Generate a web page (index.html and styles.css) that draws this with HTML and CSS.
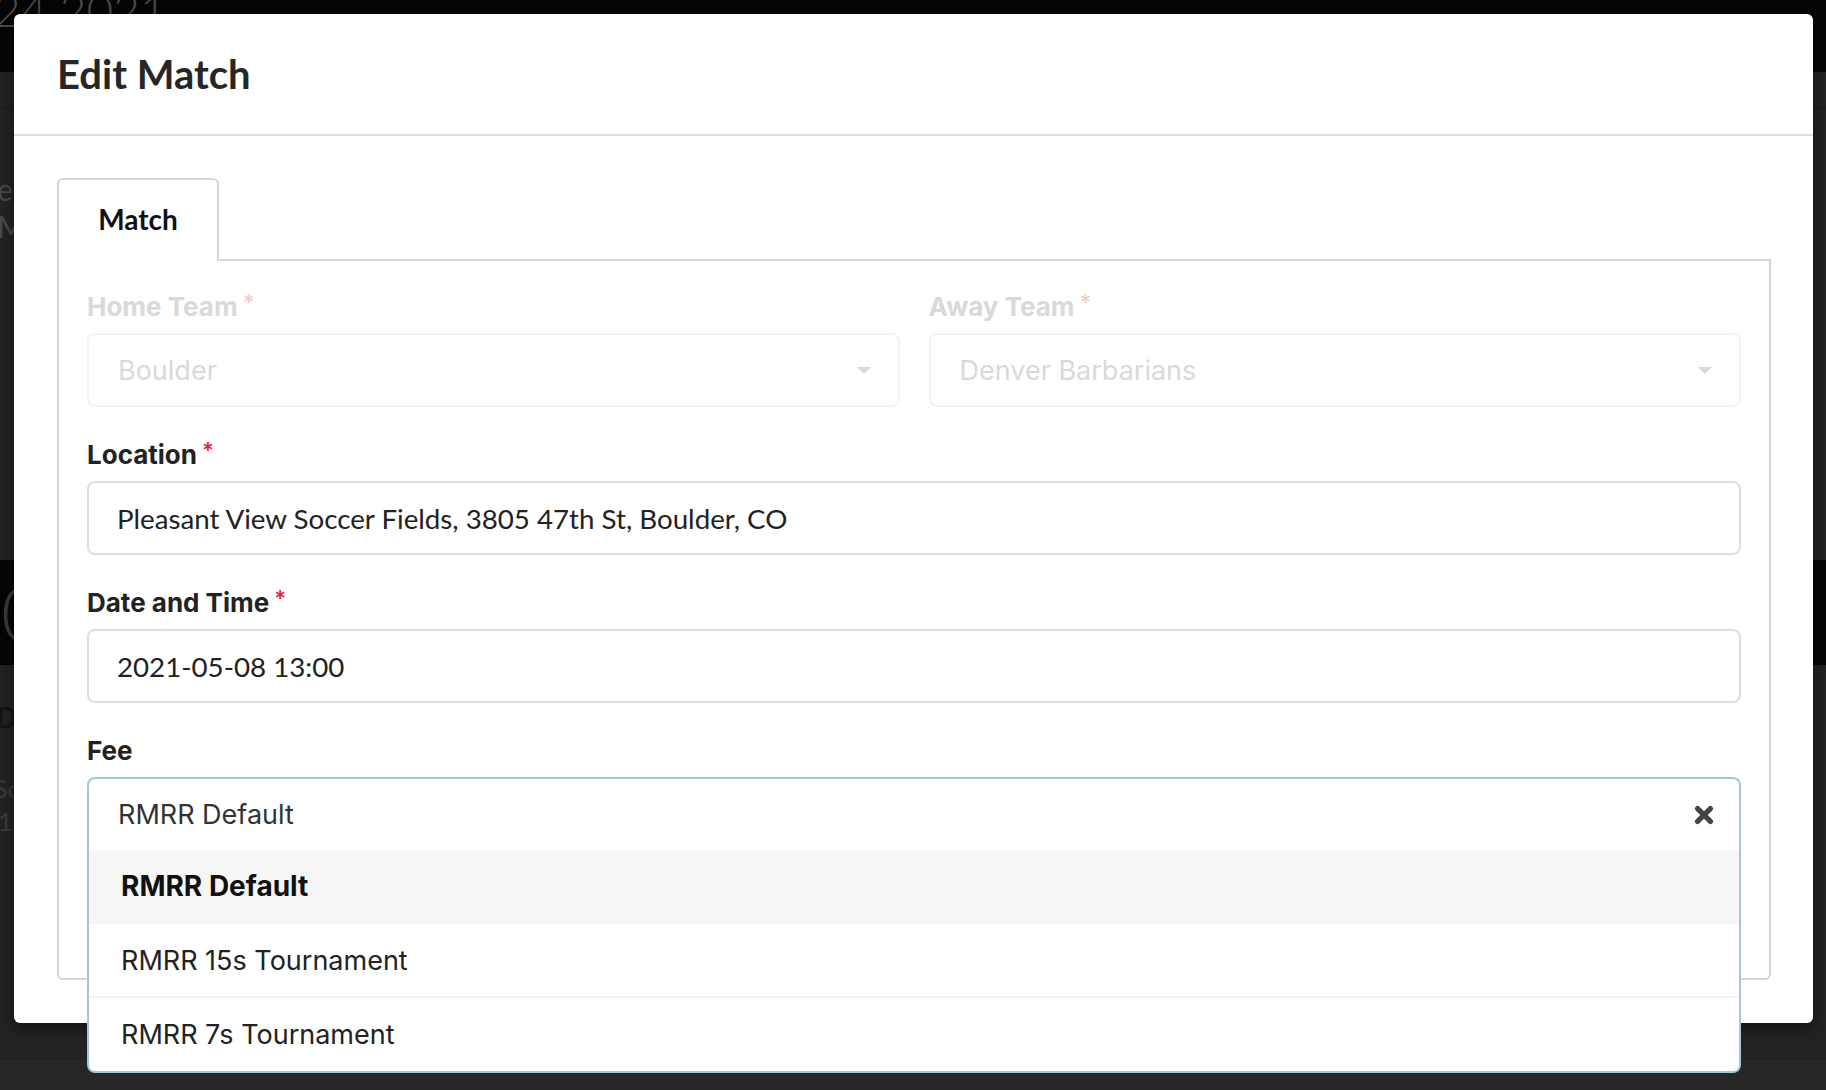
FILE: index.html
```html
<!DOCTYPE html>
<html lang="en">
<head>
<meta charset="utf-8">
<title>Edit Match</title>
<link rel="stylesheet" href="styles.css">
</head>
<body>
<div class="page">
  <div class="bg-top"><span class="bg-date">24 2021</span></div>
  <div class="bg-subbar"></div>
  <div class="bg-sec1">
    <div class="bg-text">er</div>
    <div class="bg-text">M</div>
  </div>
  <div class="bg-band"><span class="bg-big">0</span></div>
  <div class="bg-sec2">
    <div class="bg-text bg-bold">De</div>
    <div class="bg-text bg-small">Sc</div>
    <div class="bg-text bg-small bg-last">1</div>
  </div>
  <div class="bg-foot"></div>
</div>

<div class="modal">
  <div class="modal-header">
    <h2 class="modal-title">Edit Match</h2>
  </div>
  <div class="modal-body">
    <div class="tabs">
      <div class="tab">Match</div>
    </div>
    <div class="tab-panel">
      <div class="field-row">
        <div class="field">
          <label class="field-label label-disabled">Home Team<span class="req req-disabled">*</span></label>
          <div class="select">
            <span class="select-value">Boulder</span>
            <span class="select-arrow"></span>
          </div>
        </div>
        <div class="field">
          <label class="field-label label-disabled">Away Team<span class="req req-disabled">*</span></label>
          <div class="select">
            <span class="select-value">Denver Barbarians</span>
            <span class="select-arrow"></span>
          </div>
        </div>
      </div>
      <div class="field">
        <label class="field-label">Location<span class="req">*</span></label>
        <div class="input">Pleasant View Soccer Fields, 3805 47th St, Boulder, CO</div>
      </div>
      <div class="field">
        <label class="field-label">Date and Time<span class="req">*</span></label>
        <div class="input">2021-05-08 13:00</div>
      </div>
      <div class="field field-last">
        <label class="field-label">Fee</label>
        <div class="combo">
          <div class="combo-control">
            <span class="combo-value">RMRR Default</span>
            <svg class="combo-clear" width="20" height="20" viewBox="0 0 20 20" aria-hidden="true">
              <path d="M3.6 3.6 L16.4 16.4 M16.4 3.6 L3.6 16.4" stroke="#444" stroke-width="5.2" stroke-linecap="round" fill="none"/>
            </svg>
          </div>
          <div class="combo-menu">
            <div class="option option-focused">RMRR Default</div>
            <div class="option">RMRR 15s Tournament</div>
            <div class="option">RMRR 7s Tournament</div>
          </div>
        </div>
      </div>
    </div>
  </div>
</div>
</body>
</html>
```

FILE: styles.css
```css
html, body {
  margin: 0;
  padding: 0;
}

body {
  background: #232323;
  font-family: "Lato", "Liberation Sans", sans-serif;
  width: 1826px;
  height: 1090px;
  overflow: hidden;
  position: relative;
}

/* ---------- dimmed page behind the modal ---------- */
.page {
  height: 1090px;
  overflow: hidden;
}

.bg-top {
  height: 72px;
  background: #050505;
  overflow: hidden;
}

.bg-date {
  display: block;
  font: 300 46px/46px "Lato", sans-serif;
  color: #4a4a4a;
  margin: -13px 0 0 -6px;
  white-space: nowrap;
}

.bg-subbar {
  height: 36px;
  border-bottom: 1px solid #1b1b1b;
}

.bg-sec1 {
  height: 451px;
  box-sizing: border-box;
  padding-top: 62px;
}

.bg-text {
  font: 400 30px/37px "Lato", sans-serif;
  color: #4a4a4a;
  margin-left: -3px;
  white-space: nowrap;
}

.bg-band {
  height: 105px;
  background: #050505;
  overflow: hidden;
}

.bg-big {
  display: block;
  font: 300 76px/105px "Lato", sans-serif;
  color: #3a3a3a;
  margin-left: 1px;
}

.bg-sec2 {
  height: 397px;
  box-sizing: border-box;
  padding-top: 35px;
  border-bottom: 1px solid #2b2b2b;
}

.bg-bold {
  font: 700 28px/34px "Lato", sans-serif;
  color: #151515;
  margin-left: -4px;
}

.bg-small {
  font: 400 25px/30px "Lato", sans-serif;
  color: #3c3c3c;
  margin-top: 39px;
  margin-left: -6px;
}

.bg-last {
  margin-top: 3px;
  margin-left: -2px;
}

.bg-foot {
  height: 30px;
  background: #262626;
}

/* ---------- modal ---------- */
.modal {
  position: absolute;
  left: 14px;
  top: 14px;
  width: 1799px;
  background: #ffffff;
  border-radius: 6px;
  box-shadow: 0 5px 16px rgba(0, 0, 0, 0.5);
}

.modal-header {
  height: 122px;
  box-sizing: border-box;
  border-bottom: 2px solid #dedede;
  display: flex;
  align-items: center;
  padding: 0 43px;
}

.modal-title {
  margin: 0;
  font: 700 40px/48px "Lato", sans-serif;
  color: #262626;
}

.modal-body {
  padding: 42px 42px 43px 43px;
}

.tabs {
  display: flex;
  margin-bottom: -2px;
  position: relative;
  z-index: 1;
}

.tab {
  width: 162px;
  box-sizing: border-box;
  border: 2px solid #d5d5d5;
  border-bottom: none;
  border-radius: 6px 6px 0 0;
  background: #ffffff;
  padding: 22px 0 25px;
  font: 700 28px/34px "Lato", sans-serif;
  color: #111111;
  text-align: center;
}

.tab-panel {
  border: 2px solid #d5d5d5;
  border-radius: 0 0 6px 6px;
  padding: 30px 28px 128px;
}

.field-row {
  display: grid;
  grid-template-columns: 1fr 1fr;
  column-gap: 29px;
}

.field {
  margin-bottom: 32px;
}

.field-last {
  margin-bottom: 0;
}

.field-label {
  display: block;
  height: 32px;
  font: 700 26px/32px "Inter", "Liberation Sans", sans-serif;
  color: #222222;
  margin-bottom: 10px;
  white-space: nowrap;
}

.label-disabled {
  color: #d9d9d9;
}

.req {
  color: #e3262e;
  font-size: 22px;
  line-height: 0;
  font-weight: 600;
  margin-left: 5px;
  vertical-align: 6px;
}

.req-disabled {
  color: #f6c9c9;
}

.select {
  height: 74px;
  box-sizing: border-box;
  border: 2px solid #f3f3f3;
  border-radius: 8px;
  display: flex;
  align-items: center;
  justify-content: space-between;
  padding: 0 27px 0 29px;
}

.select-value {
  font: 400 27px "Inter", "Liberation Sans", sans-serif;
  color: #d9d9d9;
}

.select-arrow {
  width: 0;
  height: 0;
  border-left: 7px solid transparent;
  border-right: 7px solid transparent;
  border-top: 7px solid #d9d9d9;
}

.input {
  height: 74px;
  box-sizing: border-box;
  border: 2px solid #dedede;
  border-radius: 8px;
  display: flex;
  align-items: center;
  padding: 0 28px;
  font: 400 27.7px "Lato", sans-serif;
  color: #222222;
}

.combo {
  position: relative;
}

.combo-control {
  height: 73px;
  box-sizing: border-box;
  border: 2px solid #9ccadb;
  border-bottom: none;
  border-radius: 8px 8px 0 0;
  display: flex;
  align-items: center;
  justify-content: space-between;
  padding: 0 25px 0 29px;
}

.combo-value {
  font: 400 27px "Inter", "Liberation Sans", sans-serif;
  color: #333333;
}

.combo-clear {
  display: block;
}

.combo-menu {
  position: absolute;
  top: 100%;
  left: 0;
  right: 0;
  background: #ffffff;
  border: 2px solid #9ccadb;
  border-top: none;
  border-radius: 0 0 8px 8px;
  z-index: 2;
}

.option {
  height: 74px;
  box-sizing: border-box;
  display: flex;
  align-items: center;
  padding-left: 32px;
  font: 400 27px "Inter", "Liberation Sans", sans-serif;
  color: #222222;
  border-bottom: 2px solid #f4f4f4;
}

.option:last-child {
  height: 73px;
  border-bottom: none;
  border-radius: 0 0 6px 6px;
}

.option-focused {
  background: #f6f6f6;
  font-size: 28px;
  font-weight: 700;
  color: #111111;
}
```
